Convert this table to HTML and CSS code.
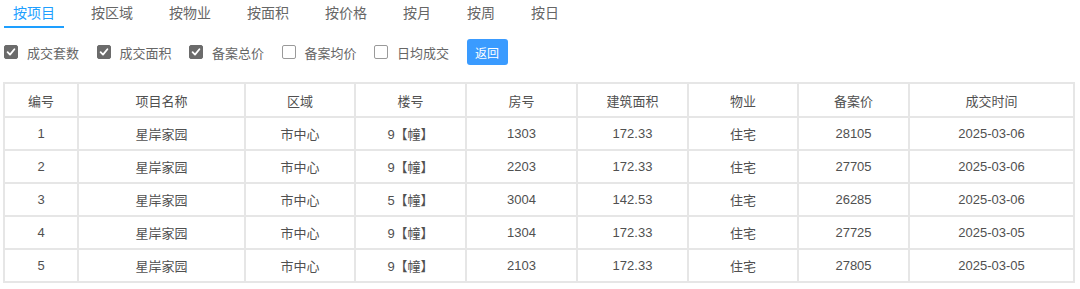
FILE: index.html
```html
<!DOCTYPE html>
<html lang="zh-CN">
<head>
<meta charset="utf-8">
<link rel="stylesheet" href="styles.css">
</head>
<body>
<div class="page">
  <nav class="tabs">
    <span class="tab active">按项目</span>
    <span class="tab">按区域</span>
    <span class="tab">按物业</span>
    <span class="tab">按面积</span>
    <span class="tab">按价格</span>
    <span class="tab">按月</span>
    <span class="tab">按周</span>
    <span class="tab">按日</span>
  </nav>
  <div class="filters">
    <label class="chk"><span class="box checked"><svg viewBox="0 0 14 14" width="14" height="14"><path d="M3.6 7.2 L6 9.6 L10.4 4.2" fill="none" stroke="#fff" stroke-width="1.8" stroke-linecap="round" stroke-linejoin="round"/></svg></span>成交套数</label>
    <label class="chk"><span class="box checked"><svg viewBox="0 0 14 14" width="14" height="14"><path d="M3.6 7.2 L6 9.6 L10.4 4.2" fill="none" stroke="#fff" stroke-width="1.8" stroke-linecap="round" stroke-linejoin="round"/></svg></span>成交面积</label>
    <label class="chk"><span class="box checked"><svg viewBox="0 0 14 14" width="14" height="14"><path d="M3.6 7.2 L6 9.6 L10.4 4.2" fill="none" stroke="#fff" stroke-width="1.8" stroke-linecap="round" stroke-linejoin="round"/></svg></span>备案总价</label>
    <label class="chk"><span class="box"></span>备案均价</label>
    <label class="chk"><span class="box"></span>日均成交</label>
    <button class="btn">返回</button>
  </div>
  <table class="grid">
    <colgroup>
      <col class="c1"><col class="c2"><col class="c3"><col class="c4"><col class="c5"><col class="c6"><col class="c7"><col class="c8"><col class="c9">
    </colgroup>
    <thead>
      <tr><th>编号</th><th>项目名称</th><th>区域</th><th>楼号</th><th>房号</th><th>建筑面积</th><th>物业</th><th>备案价</th><th>成交时间</th></tr>
    </thead>
    <tbody>
      <tr><td>1</td><td>星岸家园</td><td>市中心</td><td>9【幢】</td><td>1303</td><td>172.33</td><td>住宅</td><td>28105</td><td>2025-03-06</td></tr>
      <tr><td>2</td><td>星岸家园</td><td>市中心</td><td>9【幢】</td><td>2203</td><td>172.33</td><td>住宅</td><td>27705</td><td>2025-03-06</td></tr>
      <tr><td>3</td><td>星岸家园</td><td>市中心</td><td>5【幢】</td><td>3004</td><td>142.53</td><td>住宅</td><td>26285</td><td>2025-03-06</td></tr>
      <tr><td>4</td><td>星岸家园</td><td>市中心</td><td>9【幢】</td><td>1304</td><td>172.33</td><td>住宅</td><td>27725</td><td>2025-03-05</td></tr>
      <tr><td>5</td><td>星岸家园</td><td>市中心</td><td>9【幢】</td><td>2103</td><td>172.33</td><td>住宅</td><td>27805</td><td>2025-03-05</td></tr>
    </tbody>
  </table>
</div>
</body>
</html>
```

FILE: styles.css
```css
html, body {
  margin: 0;
  padding: 0;
  background: #fff;
}
body {
  font-family: "Liberation Sans", "Noto Sans CJK SC", sans-serif;
  color: #555;
}
.page {
  padding: 0 6px 0 3px;
}
.tabs {
  display: flex;
  gap: 18px;
  padding-left: 1px;
  height: 28px;
  align-items: flex-start;
}
.tab {
  font-size: 14px;
  line-height: 20px;
  padding: 3px 9px 3px;
  color: #666;
  border-bottom: 2px solid transparent;
}
.tab.active {
  color: #1e9fff;
  border-bottom-color: #1e9fff;
}
.filters {
  display: flex;
  align-items: center;
  height: 28px;
  margin-top: 10px;
  padding-left: 1px;
}
.chk {
  display: flex;
  align-items: center;
  font-size: 13px;
  color: #666;
  margin-right: 17.5px;
}
.box {
  width: 14px;
  height: 14px;
  box-sizing: border-box;
  border: 1px solid #9a9a9a;
  border-radius: 2px;
  margin-right: 9px;
  background: #fff;
  display: flex;
}
.box.checked {
  background: #6b6b6b;
  border-color: #6b6b6b;
}
.box svg {
  margin: -1px;
}
.btn {
  width: 41px;
  height: 26px;
  border: none;
  border-radius: 3px;
  background: #3a9bff;
  color: #fff;
  font-family: "Liberation Sans", "Noto Sans CJK SC", sans-serif;
  font-size: 12px;
  padding: 0;
}
.grid {
  margin-top: 16px;
  border-collapse: collapse;
  table-layout: fixed;
  width: 1072px;
  font-size: 13px;
  color: #505050;
}
.grid th, .grid td {
  border: 2px solid #e6e6e6;
  text-align: center;
  padding: 0;
  font-weight: normal;
  white-space: nowrap;
}
.grid th {
  height: 32px;
}
.grid td {
  height: 31px;
}
.c1 { width: 74px; }
.c2 { width: 167px; }
.c3 { width: 110px; }
.c4 { width: 111px; }
.c5 { width: 111px; }
.c6 { width: 111px; }
.c7 { width: 110px; }
.c8 { width: 111px; }
.c9 { width: 165px; }
```
